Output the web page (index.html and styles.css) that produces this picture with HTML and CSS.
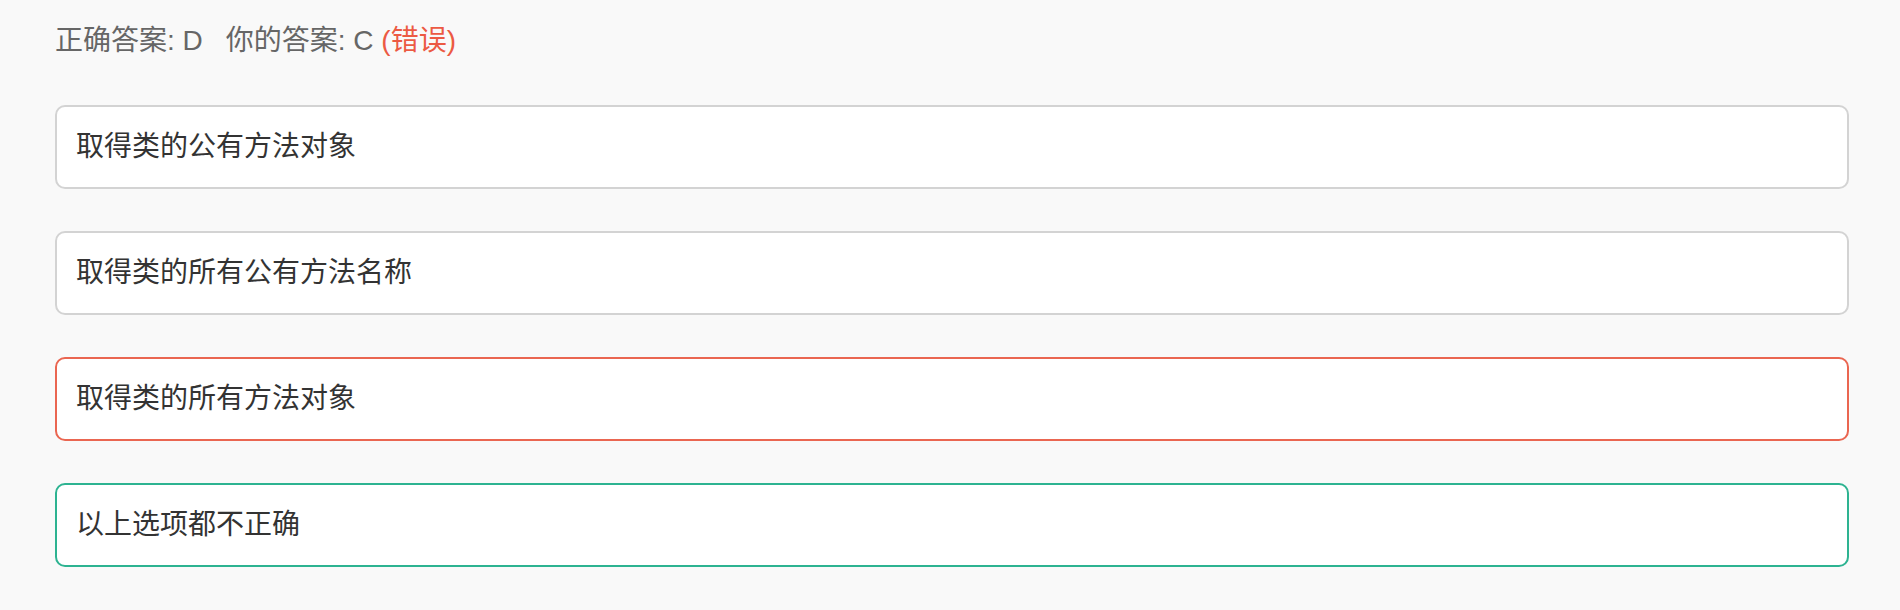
FILE: index.html
```html
<!DOCTYPE html>
<html lang="zh-CN">
<head>
<meta charset="utf-8">
<title>答案</title>
<link rel="stylesheet" href="styles.css">
</head>
<body>
<div class="page">
  <div class="result">
    <span class="label">正确答案: D</span>
    <span class="label">你的答案: C <span class="wrong">(错误)</span></span>
  </div>
  <ul class="options">
    <li class="option">取得类的公有方法对象</li>
    <li class="option">取得类的所有公有方法名称</li>
    <li class="option option-wrong">取得类的所有方法对象</li>
    <li class="option option-right">以上选项都不正确</li>
  </ul>
</div>
</body>
</html>
```
FILE: styles.css
```css
html, body {
  margin: 0;
  padding: 0;
  background: #f9f9f9;
}
body {
  font-family: "Liberation Sans", "Noto Sans CJK SC", sans-serif;
  color: #333;
}
.page {
  padding: 21px 51px 0 55px;
}
.result {
  font-size: 28px;
  line-height: 40px;
  color: #666;
  display: flex;
  gap: 23px;
}
.wrong {
  color: #ec5a43;
}
.options {
  list-style: none;
  margin: 44px 0 0 0;
  padding: 0;
  display: flex;
  flex-direction: column;
  gap: 42px;
}
.option {
  background: #fff;
  border: 2px solid #d3d3d3;
  border-radius: 10px;
  padding: 20px 19px;
  font-size: 28px;
  line-height: 40px;
  color: #333;
}
.option-wrong {
  border-color: #ea6651;
}
.option-right {
  border-color: #2db391;
}
```
